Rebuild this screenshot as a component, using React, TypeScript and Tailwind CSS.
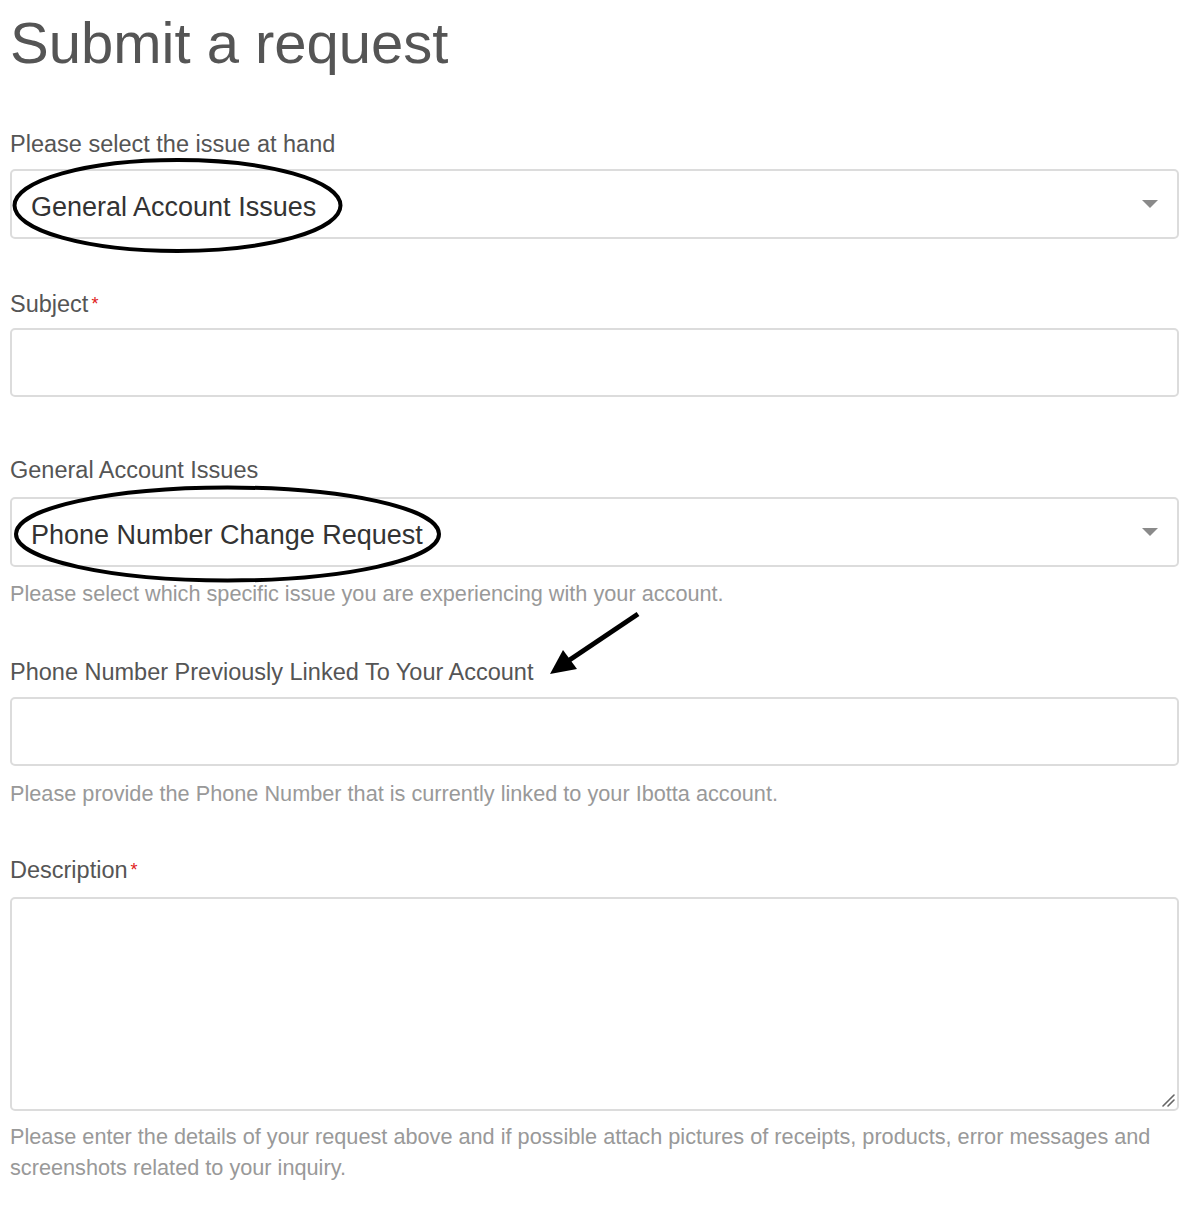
import React from "react";

const font = { fontFamily: '"Liberation Sans", Arial, sans-serif' };

function Label({ text, required, className }: { text: string; required?: boolean; className?: string }) {
  return (
    <div className={`text-[23.5px] leading-[30px] text-[#555] ${className ?? ""}`}>
      {text}
      {required && <span className="ml-[3px] text-[18px] align-top text-[#e02020]">*</span>}
    </div>
  );
}

function Select({ value, className }: { value: string; className?: string }) {
  return (
    <div
      className={`flex h-[70px] items-center justify-between rounded-[5px] border-2 border-[#dcdcdc] pl-[19px] pr-[19px] ${className ?? ""}`}
    >
      <span className="pt-[7px] text-[27px] text-[#333]">{value}</span>
      <svg width="16" height="8" viewBox="0 0 16 8">
        <path d="M0 0 L16 0 L8 8 Z" fill="#8a8a8a" />
      </svg>
    </div>
  );
}

function Hint({ children, className }: { children: React.ReactNode; className?: string }) {
  return <div className={`text-[21.7px] leading-[31px] text-[#999] ${className ?? ""}`}>{children}</div>;
}

export default function App() {
  return (
    <div className="relative w-[1200px] h-[1208px] bg-white overflow-hidden" style={font}>
      <div className="pl-[10px] pr-[21px]">
        <h1 className="mt-[10px] text-[58px] leading-[66px] text-[#555]">Submit a request</h1>

        <Label text="Please select the issue at hand" className="mt-[53px] mb-[10px]" />
        <Select value="General Account Issues" />

        <Label text="Subject" required className="mt-[50px] mb-[9px]" />
        <div className="h-[69px] rounded-[5px] border-2 border-[#dcdcdc]" />

        <Label text="General Account Issues" className="mt-[58px] mb-[12px]" />
        <Select value="Phone Number Change Request" />
        <Hint className="mt-[11px]">Please select which specific issue you are experiencing with your account.</Hint>

        <Label text="Phone Number Previously Linked To Your Account" className="mt-[48px] mb-[10px]" />
        <div className="h-[69px] rounded-[5px] border-2 border-[#dcdcdc]" />
        <Hint className="mt-[12px]">Please provide the Phone Number that is currently linked to your Ibotta account.</Hint>

        <Label text="Description" required className="mt-[46px] mb-[12px]" />
        <div className="relative h-[214px] rounded-[5px] border-2 border-[#dcdcdc]">
          <svg className="absolute right-[2px] bottom-[2px]" width="14" height="14" viewBox="0 0 14 14">
            <path d="M2 13 L13 2 M7 13 L13 7" stroke="#666" strokeWidth="1.6" strokeLinecap="round" />
          </svg>
        </div>
        <Hint className="mt-[10px]">
          Please enter the details of your request above and if possible attach pictures of receipts, products, error
          messages and screenshots related to your inquiry.
        </Hint>
      </div>

      {/* hand-drawn annotations over the form */}
      <svg className="absolute left-0 top-0 pointer-events-none" width="1200" height="1208" viewBox="0 0 1200 1208">
        <ellipse cx="177.5" cy="205.5" rx="163" ry="45.5" fill="none" stroke="#000" strokeWidth="4" />
        <ellipse cx="227.5" cy="534" rx="211.5" ry="46.5" fill="none" stroke="#000" strokeWidth="4" />
        <line x1="638" y1="614" x2="568" y2="661" stroke="#000" strokeWidth="5" />
        <path d="M550 674 L563 650 L577 669 Z" fill="#000" />
      </svg>
    </div>
  );
}
